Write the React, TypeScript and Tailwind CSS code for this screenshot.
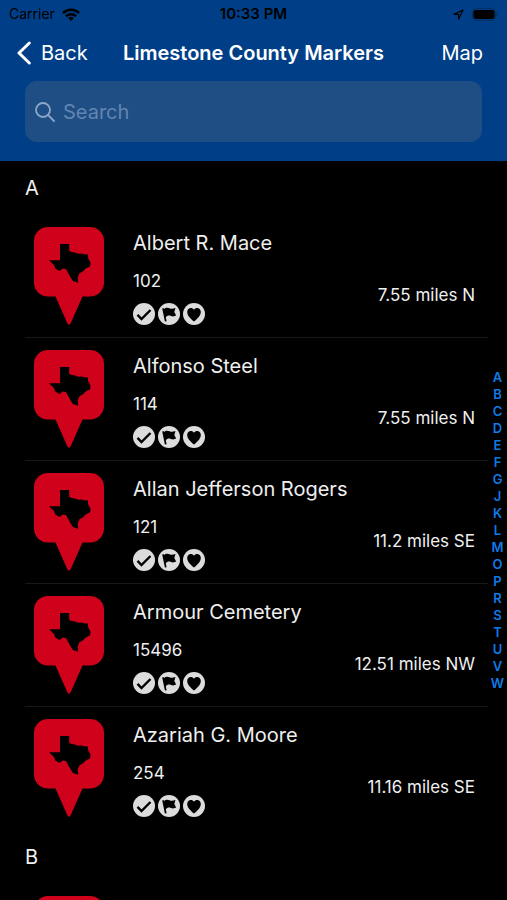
import * as React from 'react'

const markers = [
  { name: 'Albert R. Mace', id: '102', distance: '7.55 miles N' },
  { name: 'Alfonso Steel', id: '114', distance: '7.55 miles N' },
  { name: 'Allan Jefferson Rogers', id: '121', distance: '11.2 miles SE' },
  { name: 'Armour Cemetery', id: '15496', distance: '12.51 miles NW' },
  { name: 'Azariah G. Moore', id: '254', distance: '11.16 miles SE' },
]

const letters = 'ABCDEFGJKLMOPRSTUVW'.split('')

function StatusBar() {
  return (
    <div className="grid h-7 grid-cols-3 items-center px-[9px] text-sm text-black">
      <div className="flex items-center gap-[7px]">
        <span>Carrier</span>
        <svg width="18" height="13" viewBox="0 0 18 13" fill="none" stroke="currentColor" strokeWidth="2.600">
          <path d="M1 5a11.400 11.400 0 0 1 16 0" />
          <path d="M4 8.300a7.200 7.200 0 0 1 10 0" />
          <path d="M9 13 6.200 10.200a4 4 0 0 1 5.600 0Z" fill="currentColor" stroke="none" />
        </svg>
      </div>
      <span className="text-center text-[15px] font-semibold">10:33 PM</span>
      <div className="flex items-center justify-end gap-2">
        <svg width="11" height="11" viewBox="0 0 11 11" fill="none" stroke="currentColor" strokeWidth="1.200" strokeLinejoin="round">
          <path d="M10 1 1 5.300h4.600V10Z" />
        </svg>
        <svg width="26" height="13" viewBox="0 0 26 13">
          <rect x="0.500" y="0.500" width="23" height="12" rx="3.500" fill="none" stroke="currentColor" opacity="0.250" />
          <rect x="1.500" y="2" width="21" height="9" rx="2" fill="currentColor" />
          <path d="M24.500 4.500c1.800.6 1.800 3.400 0 4Z" fill="currentColor" opacity="0.300" />
        </svg>
      </div>
    </div>
  )
}

function TexasPin() {
  return (
    <svg className="shrink-0" width="70" height="98" viewBox="0 0 70 98" aria-hidden="true">
      <path
        d="M14 0h42a14 14 0 0 1 14 14v41.500a14 14 0 0 1-14 14h-7.500L37 95.500q-2 4.500-4 0L21.500 69.500H14a14 14 0 0 1-14-14V14A14 14 0 0 1 14 0Z"
        fill="#d0021b"
      />
      <path
        d="M26 17h9.200v6.700l2.300 1.300 3.500.6 3 1.200 3.700-.2 3 .9 3.200-.3.300 4.300 2.300 4-.3 3.700-4.900 2.600-1.800 2.200-4 2.300-1.800 4.200.5 5.200-5.300-1.800-2.800-4.500-2.200-4-2-3.400-3.200-.6-3 2.700-4.400-2.700-1.300-3.400-5-4.700h11Z"
        fill="#000"
      />
    </svg>
  )
}

function Badges() {
  return (
    <div className="flex gap-[3px]" aria-hidden="true">
      <svg width="22" height="22" viewBox="0 0 22 22">
        <circle cx="11" cy="11" r="11" fill="#dcdcdc" />
        <path d="m4.500 11.800 4 4.200 9-9" fill="none" stroke="#000" strokeWidth="2.400" />
      </svg>
      <svg width="22" height="22" viewBox="0 0 22 22">
        <circle cx="11" cy="11" r="11" fill="#dcdcdc" />
        <path d="M4.200 5.600 5.600 5l.4 1c1.900-1.700 3.700-1.500 5.500-.7 2 .8 3.600.6 6-.3L16.300 9l1.900 3.600c-2.300 1.200-4.200.8-5.700.2-1.900-.6-3.500-.1-4.700 1.400l.8 4.100-1.700.3Z" fill="#000" />
      </svg>
      <svg width="22" height="22" viewBox="0 0 22 22">
        <circle cx="11" cy="11" r="11" fill="#dcdcdc" />
        <path d="M11 18.500C7.300 15.200 4.200 12.400 4.200 8.900c0-4.300 5-5.200 6.800-2.200 1.800-3 6.800-2.100 6.800 2.200 0 3.500-3.100 6.300-6.800 9.600Z" fill="#000" />
      </svg>
    </div>
  )
}

function MarkerRow({ name, id, distance }: { name: string; id: string; distance: string }) {
  return (
    <li className="ml-[25px] flex h-[123px] border-b border-[#18181a] pt-3 pr-[13px] pl-[9px] last:border-transparent">
      <TexasPin />
      <div className="ml-[29px] flex flex-col">
        <h3 className="mt-1 text-xl leading-6 whitespace-nowrap">{name}</h3>
        <p className="mt-4 mb-3 text-[17px] leading-5">{id}</p>
        <Badges />
      </div>
      <span className="mt-[58px] ml-auto text-[17px] leading-5 whitespace-nowrap">{distance}</span>
    </li>
  )
}

function SectionTitle({ children }: { children: React.ReactNode }) {
  return <h2 className="flex h-[54px] items-center pl-[25px] text-xl">{children}</h2>
}

export default function App() {
  return (
    <div className="flex h-screen flex-col overflow-hidden bg-black font-['Inter',sans-serif] text-[#efefef]">
      <header className="shrink-0 bg-[#003f87] pb-[19px] text-white">
        <StatusBar />
        <nav className="grid h-[53px] grid-cols-[1fr_auto_1fr] items-center px-[17px] pb-1 text-xl">
          <button className="flex items-center gap-[10px]">
            <svg width="14" height="24" viewBox="0 0 14 24" fill="none" stroke="currentColor" strokeWidth="3" strokeLinecap="round" strokeLinejoin="round">
              <path d="M12.300 2 2 12l10.300 10" />
            </svg>
            Back
          </button>
          <h1 className="font-semibold">Limestone County Markers</h1>
          <button className="justify-self-end pr-[7px]">Map</button>
        </nav>
        <div className="mx-[25px] flex h-[61px] items-center gap-2 rounded-xl bg-[#1f4e85] px-[10px] text-[#8ca7c7]">
          <svg className="shrink-0" width="20" height="20" viewBox="0 0 20 20" fill="none" stroke="currentColor" strokeWidth="1.800" strokeLinecap="round">
            <circle cx="8" cy="8" r="7" />
            <path d="m13.200 13.200 5.800 5.800" />
          </svg>
          <input type="text" aria-label="Search" placeholder="Search" className="w-full min-w-0 bg-transparent text-xl text-white outline-none placeholder:text-[#6285b0]" />
        </div>
      </header>

      <main className="flex min-h-0 flex-1">
        <div className="min-w-0 flex-1 overflow-hidden">
          <section>
            <SectionTitle>A</SectionTitle>
            <ul>
              {markers.map((m) => (
                <MarkerRow key={m.id} {...m} />
              ))}
            </ul>
          </section>
          <section>
            <SectionTitle>B</SectionTitle>
            <div className="pt-3 pl-[34px]">
              <TexasPin />
            </div>
          </section>
        </div>
        <nav aria-label="Sections" className="flex w-[19px] flex-col justify-center text-center text-[13px] leading-[17px] font-semibold text-[#0f7ae5]">
          {letters.map((l) => (
            <a key={l} href={`#${l}`}>
              {l}
            </a>
          ))}
        </nav>
      </main>
    </div>
  )
}
